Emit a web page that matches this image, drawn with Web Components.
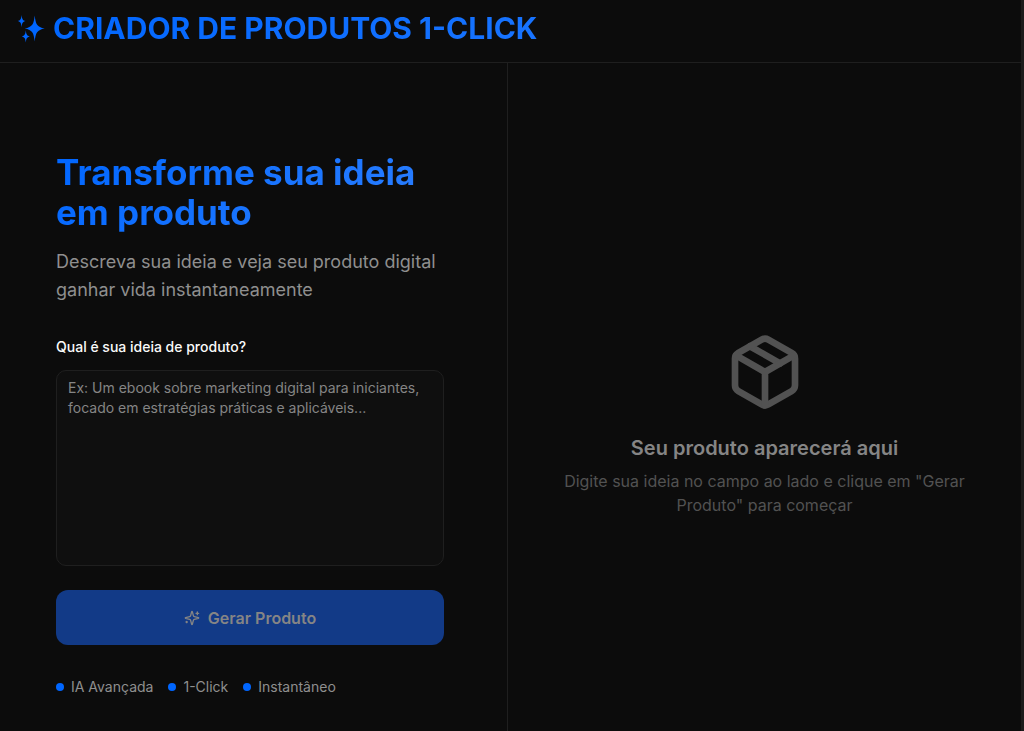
<!DOCTYPE html>
<html lang="pt-BR">
<head>
<meta charset="utf-8">
<meta name="viewport" content="width=device-width, initial-scale=1">
<title>Criador de Produtos 1-Click</title>
<style>
  :root {
    --bg: #0c0c0c;
    --surface: #0f0f0f;
    --line: #1f1f1f;
    --blue: #0066ff;
    --blue-light: #2e80ff;
    --muted: #8f8f8f;
    --gradient: linear-gradient(135deg, var(--blue), var(--blue-light));
  }
  body {
    margin: 0;
    background: var(--bg);
    color: #fafafa;
    font-family: Inter, "Liberation Sans", sans-serif;
    overflow: hidden;
  }
</style>
</head>
<body>
<product-app>
  <app-header slot="header">CRIADOR DE PRODUTOS 1-CLICK</app-header>
  <idea-form slot="form">
    <span slot="title">Transforme sua ideia em produto</span>
    <span slot="lead">Descreva sua ideia e veja seu produto digital ganhar vida instantaneamente</span>
    <feature-dot slot="features">IA Avançada</feature-dot>
    <feature-dot slot="features">1-Click</feature-dot>
    <feature-dot slot="features">Instantâneo</feature-dot>
  </idea-form>
  <empty-preview slot="preview">
    <span slot="title">Seu produto aparecerá aqui</span>
    Digite sua ideia no campo ao lado e clique em "Gerar Produto" para começar
  </empty-preview>
</product-app>

<script>
class BaseElement extends HTMLElement {
  constructor() {
    super();
    const template = document.createElement('template');
    template.innerHTML = this.constructor.markup;
    this.attachShadow({ mode: 'open' }).append(template.content.cloneNode(true));
  }
}

class ProductApp extends BaseElement {
  static markup = `
    <style>
      :host { display: flex; flex-direction: column; min-height: 100vh; box-sizing: border-box; border-right: 3px solid #1b1b1b; }
      main { flex: 1; display: grid; grid-template-columns: 508fr 513fr; }
      section { display: flex; flex-direction: column; min-width: 0; box-sizing: border-box; }
      .create { padding: 89px 63px 32px 56px; border-right: 1px solid var(--line); }
      .preview { padding: 54px 48px 0; justify-content: center; }
    </style>
    <slot name="header"></slot>
    <main>
      <section class="create"><slot name="form"></slot></section>
      <section class="preview"><slot name="preview"></slot></section>
    </main>`;
}

class AppHeader extends BaseElement {
  static markup = `
    <style>
      :host { display: block; border-bottom: 1px solid var(--line); }
      header { display: flex; align-items: center; gap: 8px; padding: 10px 16px 16px; }
      svg { flex: none; width: 29px; height: 30px; }
      h1 { flex: 1; margin: 0; font-size: 30px; line-height: 36px; font-weight: 700; color: transparent; background: var(--gradient); background-clip: text; -webkit-background-clip: text; }
    </style>
    <header>
      <svg viewBox="0 0 29 30" fill="#0066ff" aria-hidden="true">
        <path d="M18.7 2.5C19.7 11.5 21 14 28.7 15.5C21 17 19.7 19.5 18.7 28.5C17.7 19.5 16.4 17 8.7 15.5C16.4 14 17.7 11.5 18.7 2.5Z"/>
        <path d="M5.6 2C6.1 6.2 6.6 7.4 9.6 8.1C6.6 8.8 6.1 10 5.6 14.2C5.1 10 4.6 8.8 1.6 8.1C4.6 7.4 5.1 6.2 5.6 2Z"/>
        <path d="M9.8 17.3C10.3 21.5 10.8 22.7 13.8 23.4C10.8 24.1 10.3 25.3 9.8 29.5C9.3 25.3 8.8 24.1 5.8 23.4C8.8 22.7 9.3 21.5 9.8 17.3Z"/>
      </svg>
      <h1><slot></slot></h1>
    </header>`;
}

class IdeaForm extends BaseElement {
  static markup = `
    <style>
      :host { display: block; }
      h2 { margin: 0 0 16px; font-size: 35px; line-height: 40px; font-weight: 700; color: transparent; background: var(--gradient); background-clip: text; -webkit-background-clip: text; }
      p { margin: 0 0 33px; font-size: 18px; line-height: 28px; color: var(--muted); }
      form { display: flex; flex-direction: column; }
      label { font-size: 14px; line-height: 20px; font-weight: 500; margin-bottom: 13px; }
      textarea { box-sizing: border-box; width: 100%; height: 196px; margin: 0 0 24px; padding: 7px 11px; border: 1px solid var(--line); border-radius: 10px; background: var(--surface); color: inherit; font: inherit; font-size: 14px; line-height: 20px; resize: none; }
      textarea::placeholder { color: #858585; opacity: 1; }
      button { display: flex; align-items: center; justify-content: center; gap: 8px; height: 55px; margin: 0; padding: 0; border: 0; border-radius: 12px; background: #123a87; color: #858585; font: inherit; font-size: 16px; line-height: 24px; font-weight: 600; }
      svg { width: 16px; height: 16px; }
      .features { display: flex; gap: 15px; margin-top: 32px; }
    </style>
    <h2><slot name="title"></slot></h2>
    <p><slot name="lead"></slot></p>
    <form>
      <label for="idea">Qual é sua ideia de produto?</label>
      <textarea id="idea" placeholder="Ex: Um ebook sobre marketing digital para iniciantes, focado em estratégias práticas e aplicáveis..."></textarea>
      <button type="submit" disabled>
        <svg viewBox="0 0 24 24" fill="none" stroke="currentColor" stroke-width="2" stroke-linecap="round" stroke-linejoin="round" aria-hidden="true">
          <path d="M9.937 15.5A2 2 0 0 0 8.5 14.063l-6.135-1.582a.5.5 0 0 1 0-.962L8.5 9.936A2 2 0 0 0 9.937 8.5l1.582-6.135a.5.5 0 0 1 .963 0L14.063 8.5A2 2 0 0 0 15.5 9.937l6.135 1.581a.5.5 0 0 1 0 .964L15.5 14.063a2 2 0 0 0-1.437 1.437l-1.582 6.135a.5.5 0 0 1-.963 0z"/>
          <path d="M20 3v4M22 5h-4M4 17v2M5 18H3"/>
        </svg>
        Gerar Produto
      </button>
    </form>
    <div class="features"><slot name="features"></slot></div>`;
}

class FeatureDot extends BaseElement {
  static markup = `
    <style>
      :host { display: flex; align-items: center; gap: 7px; font-size: 14px; line-height: 20px; color: var(--muted); }
      i { width: 8px; height: 8px; border-radius: 50%; background: var(--blue); }
    </style>
    <i></i><span><slot></slot></span>`;
}

class EmptyPreview extends BaseElement {
  static markup = `
    <style>
      :host { display: flex; flex-direction: column; align-items: center; text-align: center; }
      svg { width: 80px; height: 80px; margin-bottom: 22px; color: #525252; }
      h3 { margin: 0 0 7px; font-size: 20px; line-height: 28px; font-weight: 600; color: #858585; }
      p { margin: 0; font-size: 16px; line-height: 24px; color: #525252; }
    </style>
    <svg viewBox="0 0 24 24" fill="none" stroke="currentColor" stroke-width="2" stroke-linecap="round" stroke-linejoin="round" aria-hidden="true">
      <path d="m7.5 4.27 9 5.15"/>
      <path d="M21 8a2 2 0 0 0-1-1.73l-7-4a2 2 0 0 0-2 0l-7 4A2 2 0 0 0 3 8v8a2 2 0 0 0 1 1.73l7 4a2 2 0 0 0 2 0l7-4A2 2 0 0 0 21 16Z"/>
      <path d="m3.3 7 8.7 5 8.7-5M12 22V12"/>
    </svg>
    <h3><slot name="title"></slot></h3>
    <p><slot></slot></p>`;
}

customElements.define('product-app', ProductApp);
customElements.define('app-header', AppHeader);
customElements.define('idea-form', IdeaForm);
customElements.define('feature-dot', FeatureDot);
customElements.define('empty-preview', EmptyPreview);
</script>
</body>
</html>
